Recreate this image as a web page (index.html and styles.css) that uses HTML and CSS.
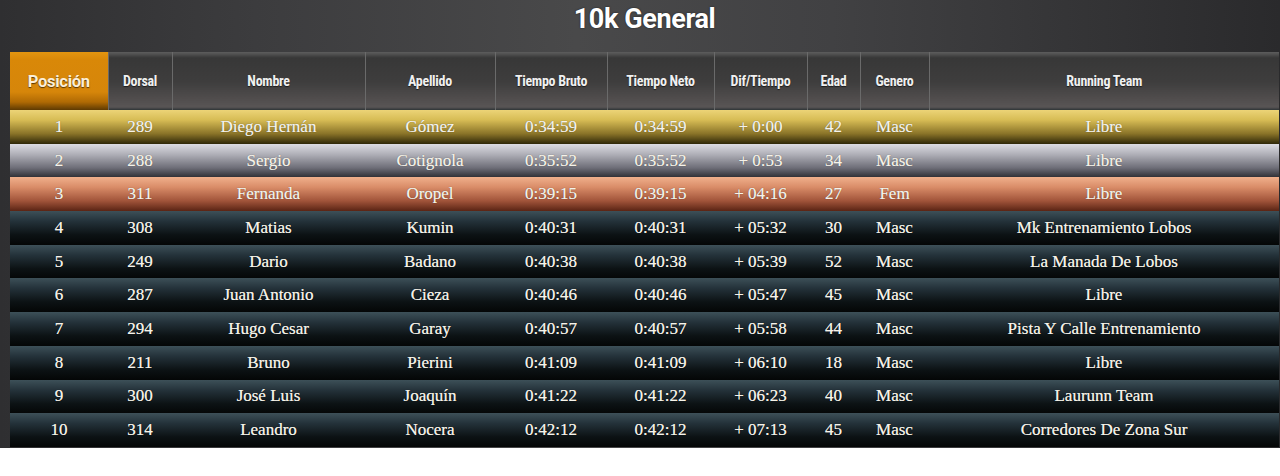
FILE: index.html
```html
<!DOCTYPE html>
<html lang="es">
<head>
<meta charset="utf-8">
<title>10k General</title>
<link rel="stylesheet" href="styles.css">
</head>
<body>
<div class="panel">
  <h1 class="title">10k General</h1>
  <table class="results">
    <colgroup>
      <col style="width:98px"><col style="width:64px"><col style="width:193px"><col style="width:130px"><col style="width:112px"><col style="width:107px"><col style="width:93px"><col style="width:53px"><col style="width:69px"><col style="width:350px">
    </colgroup>
    <thead>
      <tr>
        <th class="pos-h">Posición</th><th>Dorsal</th><th>Nombre</th><th>Apellido</th><th>Tiempo Bruto</th><th>Tiempo Neto</th><th>Dif/Tiempo</th><th>Edad</th><th>Genero</th><th>Running Team</th>
      </tr>
    </thead>
    <tbody>
      <tr class="gold"><td>1</td><td>289</td><td>Diego Hernán</td><td>Gómez</td><td>0:34:59</td><td>0:34:59</td><td>+ 0:00</td><td>42</td><td>Masc</td><td>Libre</td></tr>
      <tr class="silver"><td>2</td><td>288</td><td>Sergio</td><td>Cotignola</td><td>0:35:52</td><td>0:35:52</td><td>+ 0:53</td><td>34</td><td>Masc</td><td>Libre</td></tr>
      <tr class="bronze"><td>3</td><td>311</td><td>Fernanda</td><td>Oropel</td><td>0:39:15</td><td>0:39:15</td><td>+ 04:16</td><td>27</td><td>Fem</td><td>Libre</td></tr>
      <tr><td>4</td><td>308</td><td>Matias</td><td>Kumin</td><td>0:40:31</td><td>0:40:31</td><td>+ 05:32</td><td>30</td><td>Masc</td><td>Mk Entrenamiento Lobos</td></tr>
      <tr><td>5</td><td>249</td><td>Dario</td><td>Badano</td><td>0:40:38</td><td>0:40:38</td><td>+ 05:39</td><td>52</td><td>Masc</td><td>La Manada De Lobos</td></tr>
      <tr><td>6</td><td>287</td><td>Juan Antonio</td><td>Cieza</td><td>0:40:46</td><td>0:40:46</td><td>+ 05:47</td><td>45</td><td>Masc</td><td>Libre</td></tr>
      <tr><td>7</td><td>294</td><td>Hugo Cesar</td><td>Garay</td><td>0:40:57</td><td>0:40:57</td><td>+ 05:58</td><td>44</td><td>Masc</td><td>Pista Y Calle Entrenamiento</td></tr>
      <tr><td>8</td><td>211</td><td>Bruno</td><td>Pierini</td><td>0:41:09</td><td>0:41:09</td><td>+ 06:10</td><td>18</td><td>Masc</td><td>Libre</td></tr>
      <tr><td>9</td><td>300</td><td>José Luis</td><td>Joaquín</td><td>0:41:22</td><td>0:41:22</td><td>+ 06:23</td><td>40</td><td>Masc</td><td>Laurunn Team</td></tr>
      <tr><td>10</td><td>314</td><td>Leandro</td><td>Nocera</td><td>0:42:12</td><td>0:42:12</td><td>+ 07:13</td><td>45</td><td>Masc</td><td>Corredores De Zona Sur</td></tr>
    </tbody>
  </table>
</div>
</body>
</html>
```

FILE: styles.css
```css
html, body {
  margin: 0;
  padding: 0;
  background: #ffffff;
}

.panel {
  width: 1280px;
  height: 448px;
  padding: 0 1px 0 10px;
  box-sizing: border-box;
  background: linear-gradient(90deg, #2f2f31 0%, #3c3c3e 20%, #49494a 45%, #414143 65%, #2a2a2c 100%);
  overflow: hidden;
}

.title {
  margin: 0;
  height: 52px;
  padding-top: 2px;
  box-sizing: border-box;
  text-align: center;
  font-family: Roboto, "Liberation Sans", sans-serif;
  font-weight: 700;
  font-size: 27px;
  line-height: 34px;
  color: #ffffff;
  letter-spacing: -0.4px;
  text-shadow: 0 0 2px rgba(0,0,0,0.6);
}

.results {
  width: 1269px;
  table-layout: fixed;
  border-collapse: collapse;
  border-spacing: 0;
}

.results th {
  height: 58px;
  padding: 0;
  box-sizing: border-box;
  font-family: "Liberation Sans Narrow", "Roboto Condensed", Roboto, sans-serif;
  font-weight: 700;
  font-size: 14px;
  letter-spacing: -0.3px;
  color: #f0f0f0;
  text-align: center;
  vertical-align: middle;
  background: linear-gradient(180deg, #5e5e5e 0px, #4a4a4a 3px, #373737 6px, #3e3d3d 30px, #595555 55px, #2e3436 58px);
  border-left: 1px solid #6a6a6a;
  text-shadow: 0 1px 1px rgba(0,0,0,0.6);
}

.results th:first-child {
  border-left: none;
}

.results th.pos-h {
  font-family: Roboto, "Liberation Sans", sans-serif;
  font-size: 16.5px;
  letter-spacing: -0.3px;
  color: #fbeed8;
  background: linear-gradient(180deg, #e39510 0px, #d98808 8px, #d6860a 40px, #b06a04 50px, #5e3a02 58px);
}

.results td {
  height: 33.7px;
  padding: 0;
  font-family: "Liberation Serif", "Times New Roman", serif;
  font-size: 17px;
  color: #f6f3ea;
  text-align: center;
  vertical-align: middle;
  white-space: nowrap;
  text-shadow: 0 0 1px rgba(0,0,0,0.5), 0 0 0.5px #f6f3ea;
}

.results tbody tr {
  background: linear-gradient(180deg, #3d5058 0%, #24323a 30%, #0c1214 70%, #040606 100%);
}

.results tbody tr.gold {
  background: linear-gradient(180deg, #ecd477 0%, #d6bb54 30%, #897328 70%, #2e2708 100%);
}

.results tbody tr.silver {
  background: linear-gradient(180deg, #dcdce2 0%, #b0b0b8 30%, #6e6e78 70%, #2a2a30 100%);
}

.results tbody tr.bronze {
  background: linear-gradient(180deg, #f0b08c 0%, #d98c68 30%, #a1543a 70%, #5a2414 100%);
}
```
